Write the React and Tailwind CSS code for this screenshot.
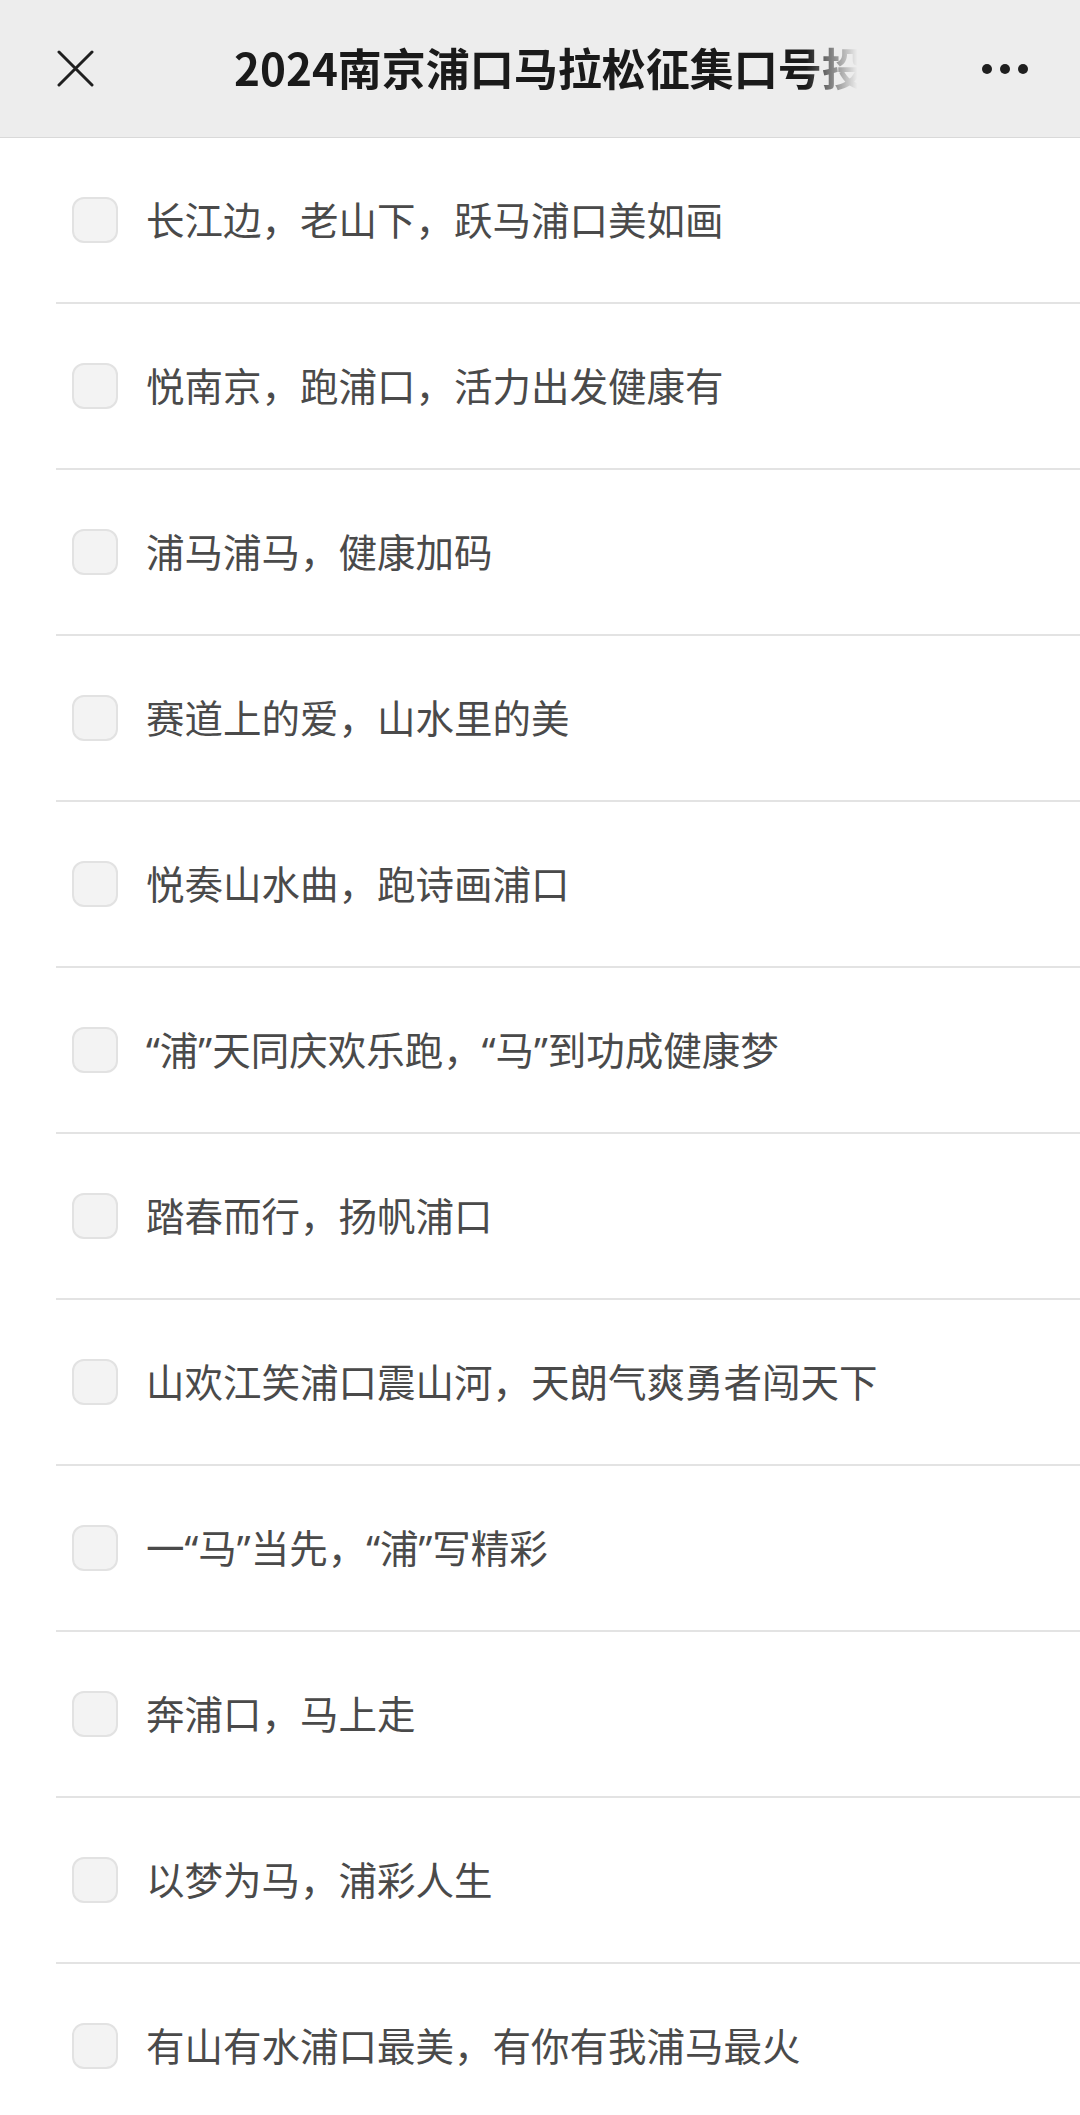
import React from "react";

const items = [
  "长江边，老山下，跃马浦口美如画",
  "悦南京，跑浦口，活力出发健康有",
  "浦马浦马，健康加码",
  "赛道上的爱，山水里的美",
  "悦奏山水曲，跑诗画浦口",
  "“浦”天同庆欢乐跑，“马”到功成健康梦",
  "踏春而行，扬帆浦口",
  "山欢江笑浦口震山河，天朗气爽勇者闯天下",
  "一“马”当先，“浦”写精彩",
  "奔浦口，马上走",
  "以梦为马，浦彩人生",
  "有山有水浦口最美，有你有我浦马最火",
];

export default function App() {
  return (
    <div
      className="w-[1080px] bg-white"
      style={{ fontFamily: '"Noto Sans", "Noto Sans CJK SC", sans-serif' }}
    >
      <div className="h-[138px] bg-[#ededed] border-b border-[#d9d9d9] flex items-center pl-[57px] pr-[52px]">
        <svg width="37" height="37" viewBox="0 0 37 37" className="shrink-0">
          <path d="M2 2 L35 35 M35 2 L2 35" stroke="#1f1f1f" strokeWidth="3" strokeLinecap="round" />
        </svg>
        <div className="ml-[140px] w-[636px] overflow-hidden whitespace-nowrap [mask-image:linear-gradient(to_right,black_90%,transparent_98%)]">
          <span
            className="text-[44px] font-bold text-[#1a1a1a] leading-none"
            style={{ fontFamily: '"Noto Sans CJK SC", sans-serif' }}
          >
            2024南京浦口马拉松征集口号投票
          </span>
        </div>
        <div className="ml-auto flex items-center gap-[8px]">
          <span className="w-[10px] h-[10px] rounded-full bg-[#1f1f1f]" />
          <span className="w-[10px] h-[10px] rounded-full bg-[#1f1f1f]" />
          <span className="w-[10px] h-[10px] rounded-full bg-[#1f1f1f]" />
        </div>
      </div>
      <div>
        {items.map((t, i) => (
          <div key={i} className="ml-[56px] h-[166px] border-b-2 border-[#e3e3e3] flex items-center pl-[16px]">
            <div className="w-[46px] h-[46px] rounded-[12px] bg-[#f3f3f3] border-2 border-[#e2e2e2] shrink-0" />
            <div className="ml-[28px] text-[38.5px] text-[#4a4a4a] leading-none whitespace-nowrap">{t}</div>
          </div>
        ))}
      </div>
    </div>
  );
}
